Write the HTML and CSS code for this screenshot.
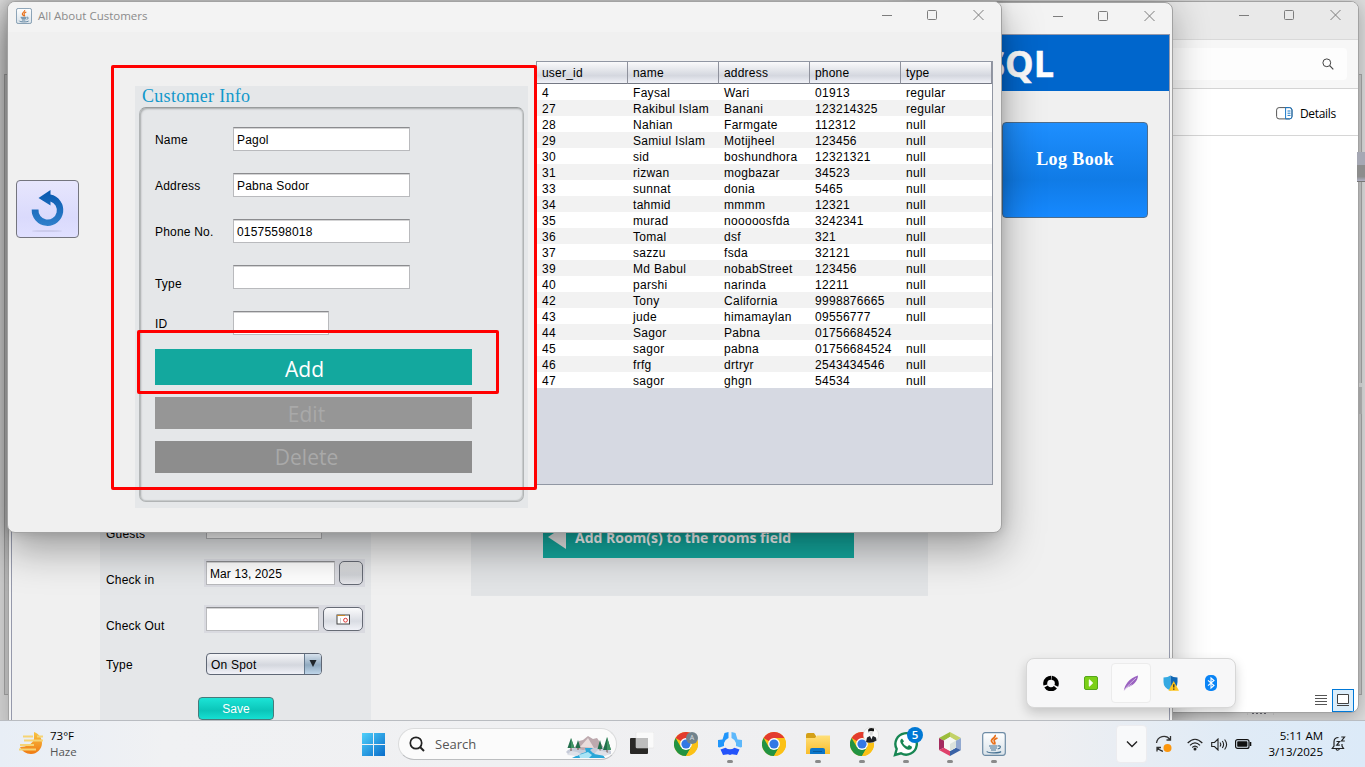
FILE: index.html
```html
<!DOCTYPE html>
<html lang="en">
<head>
<meta charset="utf-8">
<title>All About Customers</title>
<link rel="stylesheet" href="styles.css">
</head>
<body>
<svg width="0" height="0" class="defs">
  <defs>
    <linearGradient id="win" gradientUnits="userSpaceOnUse" x1="0" y1="0" x2="24" y2="24"><stop offset="0" stop-color="#4fd0fa"/><stop offset="1" stop-color="#0668c8"/></linearGradient>
    <linearGradient id="haze" x1="0" y1="0" x2="0" y2="1"><stop offset="0" stop-color="#f7c443"/><stop offset="1" stop-color="#f07a12"/></linearGradient>
    <linearGradient id="folder" x1="0" y1="0" x2="0" y2="1"><stop offset="0" stop-color="#ffe07a"/><stop offset="1" stop-color="#f9bd2c"/></linearGradient>
    <linearGradient id="undo" x1="0" y1="0" x2="0" y2="1"><stop offset="0" stop-color="#0758ae"/><stop offset="1" stop-color="#3080cb"/></linearGradient>
    <linearGradient id="javabg" x1="0" y1="0" x2="0" y2="1"><stop offset="0" stop-color="#fff"/><stop offset="1" stop-color="#d9e2e9"/></linearGradient>
    <symbol id="java" viewBox="0 0 24 24">
      <rect x=".7" y=".7" width="22.6" height="22.6" rx="2.5" fill="url(#javabg)" stroke="#6d8ba5" stroke-width="1.2"/>
      <path d="M13 3C14.500 5.500 8.500 6.800 9.500 9.300C10 10.500 11.500 11 11.500 12.500M15.500 6C13 7 11.500 8 12.300 9.300C13 10.300 13.500 11 12.500 12.500" fill="none" stroke="#e8701a" stroke-width="1.700"/>
      <path d="M7 14H15.500M8 16H15M9 18H14M16 14C19.500 13.200 19 16.600 15.700 16.800M5 19.200C5 21.300 17.500 21.300 19 19.500" fill="none" stroke="#477293" stroke-width="1.200"/>
    </symbol>
    <symbol id="chrome" viewBox="0 0 24 24">
      <circle cx="12" cy="12" r="12" fill="#fbc116"/>
      <path d="M12 12L1.600 6A12 12 0 0 1 22.400 6H12z" fill="#e33b2e"/>
      <path d="M1.600 6A12 12 0 0 0 12 24l5.200-9L12 12 6.800 15z" fill="#229342"/>
      <path d="M12 24A12 12 0 0 0 22.400 6H12l5.200 9z" fill="#fbc116"/>
      <circle cx="12" cy="12" r="5.900" fill="#fff"/><circle cx="12" cy="12" r="4.600" fill="#3378e5"/>
    </symbol>
    <symbol id="controls" viewBox="0 0 104 12">
      <path d="M1 6.500h10M92.500 1l10 10M102.500 1l-10 10" fill="none" stroke="#7d7d7d"/>
      <rect x="46.500" y="1.500" width="9" height="9" rx="1" fill="none" stroke="#7d7d7d"/>
    </symbol>
  </defs>
</svg>
<main class="desktop">
  <div class="edge-window"></div>
  <div class="edge-thumb"></div>
  <div class="edge-gap"></div>

  <section class="window explorer">
    <header class="explorer-title"><svg class="controls"><use href="#controls"/></svg></header>
    <div class="explorer-search"><div class="searchfield"><svg width="12" height="12" viewBox="0 0 12 12"><circle cx="4.800" cy="4.800" r="3.900" fill="none" stroke="#444"/><path d="M7.700 7.700l3.600 3.600" stroke="#444" stroke-width="1.200"/></svg></div></div>
    <div class="explorer-tools">
      <svg width="17" height="13" viewBox="0 0 17 13"><rect x=".6" y=".6" width="15.400" height="11.300" rx="2.500" fill="#fff" stroke="#555"/><path d="M9.600.6h4a2.500 2.500 0 0 1 2.400 2.500v6.300a2.500 2.500 0 0 1-2.400 2.500h-4zM11.500 4h3M11.500 6.200h3M11.500 8.400h3" fill="none" stroke="#1878c8"/></svg>
      <span>Details</span>
    </div>
    <footer class="explorer-views">
      <svg width="12" height="11" viewBox="0 0 12 11"><path d="M0 .5h12M0 3.500h12M0 6.500h12M0 9.500h12" stroke="#555"/></svg>
      <span class="view-on"><svg width="14" height="13" viewBox="0 0 14 13"><path d="M1.500.5h11v9h-11zM1 11.500h12" fill="#fff" stroke="#444"/></svg></span>
    </footer>
  </section>
  <div class="edge-mark"></div>

  <section class="window booking">
    <header class="booking-title"><svg class="controls"><use href="#controls"/></svg></header>
    <div class="booking-client">
      <div class="banner">SQL</div>
      <div class="booking-body">
        <div class="guest-form">
          <div class="grow g1"><label>Guests</label><span class="input w116"></span></div>
          <div class="grow g2"><label>Check in</label><span class="datebox"><span class="input w130">Mar 13, 2025</span><span class="metal mini"></span></span></div>
          <div class="grow g3"><label>Check Out</label><span class="datebox"><span class="input w114"></span><span class="metal calbtn"><svg width="15" height="11" viewBox="0 0 15 11"><rect x="1" y="1" width="12.500" height="9" fill="#fff" stroke="#444"/><path d="M1 1.500h8" stroke="#c8882a"/><path d="M4.500 4v5" stroke="#ccc"/><circle cx="9.500" cy="6.200" r="1.900" fill="none" stroke="#e03535"/></svg></span></span></div>
          <div class="grow g4"><label>Type</label><span class="combo"><span>On Spot</span><i><svg width="8" height="8"><path d="M.5 0h7L4 7z" fill="#20262b"/></svg></i></span></div>
          <button class="save">Save</button>
        </div>
        <div class="room-panel"><div class="room-btn"><svg width="18" height="24" viewBox="0 0 18 24"><path d="M0 12L18 0v24z" fill="#e8e8e8"/></svg><span>Add Room(s) to the rooms field</span></div></div>
        <div class="logbook">Log Book</div>
      </div>
    </div>
  </section>

  <section class="window customers">
    <header class="customers-title"><svg width="16" height="16"><use href="#java"/></svg><span>All About Customers</span><svg class="controls"><use href="#controls"/></svg></header>
    <div class="customers-body">
      <button class="back"><svg width="36" height="46" viewBox="0 0 36 46"><path d="M20.500 4v4.600A15.800 15.800 0 1 1 1.700 23.500H8.500A9.200 9.200 0 1 0 20.500 15.600V19.500L8.500 12z" fill="url(#undo)"/><ellipse cx="17" cy="45" rx="15" ry="1" fill="#b8b8da" opacity=".5"/></svg></button>
      <fieldset class="customer-info">
        <div class="legend">Customer Info</div>
        <div class="frame">
          <div class="row"><label>Name</label><span class="input">Pagol</span></div>
          <div class="row"><label>Address</label><span class="input">Pabna Sodor</span></div>
          <div class="row"><label>Phone No.</label><span class="input">01575598018</span></div>
          <div class="row low"><label>Type</label><span class="input"></span></div>
          <div class="row last"><label>ID</label><span class="input short"></span></div>
          <div class="action add"><span>Add</span></div>
          <div class="action edit"><span>Edit</span></div>
          <div class="action delete"><span>Delete</span></div>
        </div>
      </fieldset>
      <div class="tablebox">
        <table>
          <thead><tr><th>user_id</th><th>name</th><th>address</th><th>phone</th><th>type</th></tr></thead>
          <tbody>
            <tr><td>4</td><td>Faysal</td><td>Wari</td><td>01913</td><td>regular</td></tr>
            <tr><td>27</td><td>Rakibul Islam</td><td>Banani</td><td>123214325</td><td>regular</td></tr>
            <tr><td>28</td><td>Nahian</td><td>Farmgate</td><td>112312</td><td>null</td></tr>
            <tr><td>29</td><td>Samiul Islam</td><td>Motijheel</td><td>123456</td><td>null</td></tr>
            <tr><td>30</td><td>sid</td><td>boshundhora</td><td>12321321</td><td>null</td></tr>
            <tr><td>31</td><td>rizwan</td><td>mogbazar</td><td>34523</td><td>null</td></tr>
            <tr><td>33</td><td>sunnat</td><td>donia</td><td>5465</td><td>null</td></tr>
            <tr><td>34</td><td>tahmid</td><td>mmmm</td><td>12321</td><td>null</td></tr>
            <tr><td>35</td><td>murad</td><td>nooooosfda</td><td>3242341</td><td>null</td></tr>
            <tr><td>36</td><td>Tomal</td><td>dsf</td><td>321</td><td>null</td></tr>
            <tr><td>37</td><td>sazzu</td><td>fsda</td><td>32121</td><td>null</td></tr>
            <tr><td>39</td><td>Md Babul</td><td>nobabStreet</td><td>123456</td><td>null</td></tr>
            <tr><td>40</td><td>parshi</td><td>narinda</td><td>12211</td><td>null</td></tr>
            <tr><td>42</td><td>Tony</td><td>California</td><td>9998876665</td><td>null</td></tr>
            <tr><td>43</td><td>jude</td><td>himamaylan</td><td>09556777</td><td>null</td></tr>
            <tr><td>44</td><td>Sagor</td><td>Pabna</td><td>01756684524</td><td></td></tr>
            <tr><td>45</td><td>sagor</td><td>pabna</td><td>01756684524</td><td>null</td></tr>
            <tr><td>46</td><td>frfg</td><td>drtryr</td><td>2543434546</td><td>null</td></tr>
            <tr><td>47</td><td>sagor</td><td>ghgn</td><td>54534</td><td>null</td></tr>
          </tbody>
        </table>
      </div>
    </div>
  </section>
  <div class="mark mark-form"></div>
  <div class="mark mark-add"></div>

  <div class="tray">
    <span><svg width="16" height="16" viewBox="0 0 16 16"><circle cx="8" cy="8.500" r="5.800" fill="none" stroke="#000" stroke-width="4" stroke-dasharray="10.650 1.500" transform="rotate(-82.500 8 8.500)"/></svg></span>
    <span><svg width="16" height="16" viewBox="0 0 16 16"><rect x="1.500" y="1.500" width="13" height="13" rx="1.500" fill="#7bd018" stroke="#55a61b"/><path d="M6.300 4.800L9.700 8l-3.400 3.200z" fill="#fff" stroke="#fff"/></svg></span>
    <span class="tray-on"><svg width="16" height="16" viewBox="0 0 16 16"><path d="M1 15.500C1.500 10 6 3.500 15 .5 15 6 10 11 4 12.500z" fill="#9a62c0"/><path d="M1 15.500C5 10 9 7 13 3M4.500 12L9 9.700" stroke="#e4d4ef" fill="none" stroke-width=".7"/></svg></span>
    <span><svg width="16" height="16" viewBox="0 0 16 16"><path d="M.5 2.500Q5 2.500 7.500.5v15Q.5 13 .5 7z" fill="#35a9e2"/><path d="M7.500.5Q10 2.500 14.500 2.500V7q0 6-7 8.500z" fill="#1067b5"/><path d="M10.700 6L16 15.700H5.500z" fill="#ffc51b"/><path d="M10.800 9.300v3.200M10.800 13.500v1.200" stroke="#222" stroke-width="1.200"/></svg></span>
    <span><svg width="14" height="16" viewBox="0 0 14 16"><rect x="1" y="0" width="12" height="16" rx="5" fill="#0a84f5"/><path d="M4 5.300l6 5.200-3 2.500V3l3 2.500-6 5.200" fill="none" stroke="#fff" stroke-width="1.100"/></svg></span>
  </div>

  <footer class="taskbar">
    <div class="weather">
      <svg width="26" height="24" viewBox="0 0 26 24"><path d="M15 0c5 2 8 6 8 11 0 6-5 11-11 11-5 0-9-3-11-7 6 0 13-3 14-8z" fill="url(#haze)"/><path d="M4 4.500h10M18 4.500h6M5 8.500h19M1 13h14M0 17.500h17" stroke="#f6d474" stroke-width="2"/></svg>
      <div><b>73°F</b><em>Haze</em></div>
    </div>
    <svg class="start" width="24" height="24" viewBox="0 0 24 24"><path d="M0 0h11v11H0zM12 0h11v11H12zM0 12h11v11H0zM12 12h11v11H12z" fill="url(#win)"/></svg>
    <div class="search"><svg width="16" height="16" viewBox="0 0 16 16"><circle cx="7" cy="7" r="5.700" fill="none" stroke="#222" stroke-width="1.700"/><path d="M11 11l4 4" stroke="#222" stroke-width="1.900"/></svg><span>Search</span>
      <svg class="scene" width="46" height="22" viewBox="0 0 46 22"><path d="M8 12L13 5l4-1 5-4 5 3 4-1 7 10-6 4H12z" fill="#bda9ae"/><path d="M14 11l8-9 3 5 3 5z" fill="#e9dcdb"/><path d="M0 16q3-4 9-4l8 2 11-2 9-1 8 4v3l-8 1H3z" fill="#c7ccd9"/><path d="M19 12h8l-3 2 3 3 10 2 2 3H6l8-4 6-2z" fill="#2aa7d8"/><path d="M13 19l9-3 4 3-3 3h-9z" fill="#a9e4f5"/><path d="M5 2l3.500 10h-7zM12 4l2.500 8h-5zM34 4l2.500 9h-5zM41 1l4 13h-8z" fill="#23704d"/><path d="M5 2l3.500 10H5zM41 1l4 13h-4z" fill="#3f9463"/><path d="M5 12v3M12 12v2M34 13v2M41 14v3" stroke="#765047"/><path d="M1 19l4-4 6 1 4 2-4 2zM28 18l4-4 8 2 4 2-5 2z" fill="#dfe1e8"/></svg>
    </div>
    <div class="apps">
      <span><svg width="24" height="24" viewBox="0 0 24 24"><rect x="0" y="6" width="18" height="16" rx="1" fill="#292826"/><rect x="6" y="0" width="18" height="16" rx="1" fill="#fafafa" stroke="#ddd" stroke-width=".5"/><path d="M6 6h12v10H6z" fill="#bdbdbd"/></svg></span>
      <span><svg width="24" height="24"><use href="#chrome"/></svg><i class="avatar">A</i></span>
      <span class="run"><svg width="24" height="24" viewBox="0 0 24 24"><path d="M6.500 1L10.500 0v6Q7 7.500 6 11v3L1.500 15.500 0 15V8l4.500-.5z" fill="#2196fb"/><path d="M17.500 1L13.500 0v6Q17 7.500 18 11v3l4.500 1.500L24 15V8l-4.500-.5z" fill="#5db8fb"/><path d="M2.500 17.500L7.500 15.700Q12 19 16.500 15.700l5 1.800-2.500 5.500-5-.8-2 .8-2-.8-5 .8z" fill="#2453fa"/></svg></span>
      <span><svg width="24" height="24"><use href="#chrome"/></svg></span>
      <span class="run"><svg width="24" height="24" viewBox="0 0 24 24"><path d="M0 3q0-2 2-2h6l2 3v3H0z" fill="#d4a017"/><path d="M0 6h9l2-2.500h13V22H0z" fill="url(#folder)"/><path d="M4 22v-4q0-2 2-2h11q2 0 2 2v4z" fill="#0b75c9"/><path d="M7 19.500h9" stroke="#075a9e"/></svg></span>
      <span class="run"><svg width="24" height="24"><use href="#chrome"/></svg><svg class="photo" width="16" height="16" viewBox="0 0 16 16"><circle cx="8" cy="8" r="7.700" fill="#fafafa" stroke="#ccc" stroke-width=".5"/><path d="M5 3q1-3 6-1.500V4l-1 .5q-2-1-4 0V6z" fill="#151515"/><path d="M6.500 4.500l3.500 0-.5 4H7z" fill="#ddd"/><path d="M3 15l1-4.500 3-1.500 1 2 2-2 3 1.500.5 3Q8 17 3 15z" fill="#202328"/><path d="M7.500 9.500l1 3 1-3z" fill="#fff"/></svg></span>
      <span class="run"><svg width="26" height="26" viewBox="0 0 26 26"><path d="M2 24L3.700 18A10.700 10.700 0 1 1 8 22.300z" fill="#fff" stroke="#178653" stroke-width="2.400"/><path d="M9 7.500q-3 2-1 5 3 5 7 6.300 4 .5 4-3l-3-1.700-1.700 1.700q-3-1-4.500-4l1.200-1.500z" fill="#178653"/></svg><i class="count">5</i></span>
      <span class="run"><svg width="22" height="24" viewBox="0 0 22 24"><path d="M0 6L11 0v5L5 8.700z" fill="#9bbd3c"/><path d="M11 0l11 6-5 2.700L11 5z" fill="#c3d268"/><path d="M0 6l5 2.700v7L0 18z" fill="#a42c5e"/><path d="M0 18l5-2.300 6 3.300v5z" fill="#df416b"/><path d="M22 6l-5 2.700v7l5 2.300z" fill="#92a9d0"/><path d="M22 18l-5-2.300-6 3.300v5z" fill="#3a62a6"/><path d="M5 8.500l6-3.500 6 3.500v7L11 19l-6-3.500z" fill="#f5f8f3"/><path d="M11 12v7l6-3.500v-7z" fill="#dbe3dd"/></svg></span>
      <span class="run"><svg width="24" height="24"><use href="#java"/></svg></span>
    </div>
    <div class="status">
      <span class="chev"><svg width="12" height="8" viewBox="0 0 12 8"><path d="M1 1.500l5 5 5-5" fill="none" stroke="#222" stroke-width="1.400"/></svg></span>
      <svg class="sync" width="18" height="18" viewBox="0 0 18 18"><path d="M1.500 8A7.500 7.500 0 0 1 15 4.500M15.500 1v4h-4M8 16.300Q4 15.500 2 12M2 16.500v-4h4" fill="none" stroke="#333" stroke-width="1.300"/><circle cx="12.500" cy="13" r="4" fill="#fb960e"/></svg>
      <svg class="wifi" width="16" height="13" viewBox="0 0 16 13"><path d="M.7 5Q8-2.500 15.300 5M3 7.300q5-5 10 0M5.300 9.500q2.700-2.600 5.400 0" fill="none" stroke="#222" stroke-width="1.200"/><circle cx="8" cy="11" r="1.500" fill="#222"/></svg>
      <svg class="vol" width="17" height="13" viewBox="0 0 17 13"><path d="M.7 4.500h2.800L7 1v11L3.500 8.500H.7zM9 4.500q1.500 2 0 4M11.300 3q2.600 3.500 0 7M13.600 1.500q4 5 0 10" fill="none" stroke="#222" stroke-width="1.100"/></svg>
      <svg class="bat" width="17" height="10" viewBox="0 0 17 10"><rect x=".6" y=".6" width="13.400" height="8.800" rx="2" fill="none" stroke="#111" stroke-width="1.200"/><rect x="2.200" y="2.200" width="10.200" height="5.600" rx=".8" fill="#111"/><path d="M15.500 3v4" stroke="#111" stroke-width="1.600"/></svg>
      <div class="clock"><span>5:11 AM</span><span>3/13/2025</span></div>
      <svg class="bell" width="15" height="16" viewBox="0 0 15 16"><path d="M7.500 1.500Q3 1.500 3 6v4l-1.700 2.500H12.500L11 10V8M5 13q1.500 2.500 3.500 0M5.500 5.500h3L5.700 9.200h3.100M10.300 1h3.200l-3 4h3.300" fill="none" stroke="#222" stroke-width="1.200"/></svg>
    </div>
  </footer>
</main>
</body>
</html>
```
FILE: styles.css
```css
* { box-sizing: border-box; }
body { margin: 0; font: 12px "Liberation Sans", Arial, sans-serif; color: #000; }
svg { display: block; flex: none; }
button { font: inherit; padding: 0; }
.defs { position: absolute; }
.desktop { position: relative; width: 1365px; height: 767px; overflow: hidden; background: #dedede; }

/* windows */
.window { position: absolute; border: 1px solid #a2a2a2; border-radius: 8px; overflow: hidden; }
.controls { width: 104px; height: 12px; margin-left: auto; }

.edge-window { position: absolute; left: 4px; top: 74px; width: 1358px; height: 621px; border: 1px solid #a9a9a9; background: #cdcdcd; }
.edge-thumb { position: absolute; left: 1357px; top: 152px; width: 8px; height: 30px; z-index: 1; background: linear-gradient(#a6a8b4 0 45%, #8d8d8d 45% 85%, #b0b1c4); border-bottom: 1px solid #777; }
.edge-gap { position: absolute; left: 1358px; top: 383px; width: 4px; height: 31px; background: #bababa; border-top: 4px solid #dedede; }
.edge-mark { position: absolute; left: 1247px; top: 713px; width: 27px; height: 2px; border: solid #aaa; border-width: 0 1px; background: repeating-linear-gradient(90deg, #55555d 0 2px, transparent 2px 4px) 4px 0 / 15px 1px no-repeat; }

.explorer { left: 900px; top: 1px; width: 459px; height: 712px; background: #fff; display: flex; flex-direction: column; box-shadow: 0 4px 20px rgba(0,0,0,.28); }
.explorer-title { height: 38px; flex: none; background: #e9e9e9; padding: 7px 17px 0; border-bottom: 1px solid #d9d9d9; }
.explorer-search { height: 49px; flex: none; background: #f7f7f7; padding: 8px 11px 8px 0; border-bottom: 1px solid #d4d4d4; }
.searchfield { height: 32px; background: #fdfdfd; border-radius: 4px; display: flex; align-items: center; justify-content: flex-end; padding-right: 13px; }
.explorer-tools { height: 47px; flex: none; display: flex; align-items: center; justify-content: flex-end; gap: 7px; padding: 2px 22px 0 0; border-bottom: 1px solid #d6d6d6; font: 12px "Open Sans", sans-serif; letter-spacing: -.3px; }
.explorer-title { padding-right: 16px; }
.explorer-views { margin-top: auto; display: flex; justify-content: flex-end; align-items: center; gap: 5px; padding-right: 4px; }
.view-on { width: 22px; height: 23px; border: 1px solid #0078d7; background: #dceefb; display: grid; place-items: center; }

.booking { left: 8px; top: 2px; width: 1165px; height: 740px; background: #f3f3f3; box-shadow: 0 6px 36px rgba(0,0,0,.3); }
.booking-title { height: 31px; padding: 7px 16px 0; }
.booking-client { margin: 0 2px; height: 708px; border: 1px solid #9599ab; background: #f0f0f0; }
.banner { height: 56px; background: #0066cc; color: #fff; font: bold 36px/58px "Open Sans", sans-serif; -webkit-text-stroke: .5px #fff; text-align: right; padding-right: 115px; }
.booking-body { display: flex; height: 650px; padding-left: 88px; align-items: flex-start; }
.guest-form { width: 271px; height: 650px; background: #e5e7e9; padding: 424px 6px 0; }
.grow { display: flex; align-items: flex-start; }
.grow label { width: 100px; letter-spacing: .2px; }
.g1 { height: 44px; }
.g1 label { padding-top: 12px; }
.g2 { height: 46px; }
.g3 { height: 46px; }
.g2 label, .g3 label { padding-top: 14px; width: 98px; }
.g4 { padding-top: 2px; height: 46px; }
.g4 label { padding-top: 5px; }
.datebox { width: 161px; height: 28px; padding: 2px; display: flex; gap: 4px; background: #d9dae0; }
.input { width: 177px; height: 24px; background: #fff; border: 1px solid #b9babd; border-top-color: #8b8c8f; box-shadow: inset 0 1px #d4d4d5; padding-left: 3px; line-height: 24px; letter-spacing: .2px; }
.w116 { width: 116px; } .w130 { width: 130px; } .w114 { width: 114px; }
.w130 { letter-spacing: .1px; }
.metal { width: 24px; height: 24px; border: 1px solid #666b75; border-radius: 5px; background: linear-gradient(#fbfbfc, #d9dce3 60%, #f1f2f8); display: grid; place-items: center; }
.mini { background: linear-gradient(#dedfe0, #d0d2d6 60%, #e8e8ec); }
.calbtn { width: 40px; }
.combo { width: 116px; height: 22px; display: flex; border: 1px solid #5f6775; border-radius: 4px; background: linear-gradient(#f5f6f8, #d4d7de 55%, #f1f2f8); line-height: 22px; overflow: hidden; letter-spacing: .2px; }
.combo span { flex: 1; padding-left: 4px; }
.combo i { width: 17px; background: linear-gradient(#d7e2ed, #90aac0 55%, #bfd6ea); border-left: 1px solid #64788c; display: grid; place-items: center; }
.save { display: block; margin-left: 92px; width: 76px; height: 23px; border: 1px solid #487a7a; border-radius: 4px; background: linear-gradient(#1ce4d6, #0bc5b9 60%, #16e0d2); color: #fff; }
.room-panel { margin-left: 100px; width: 457px; height: 505px; background: #e2e4e6; padding: 427px 72px 0; }
.room-btn { width: 311px; height: 40px; background: #13a89e; display: flex; align-items: center; gap: 9px; padding: 0 0 2px 5px; color: #fff; font: bold 14px "Open Sans", sans-serif; }
.logbook { margin: 31px 0 0 74px; width: 146px; height: 96px; border: 1px solid #4e6d8c; border-radius: 4px; background: linear-gradient(#1e8fff, #107be6 60%, #1689ff); color: #fff; font: bold 18px/73px "Liberation Serif", serif; text-align: center; letter-spacing: .4px; }

.customers { left: 7px; top: 1px; width: 995px; height: 532px; background: #f0f0f0; box-shadow: 0 16px 42px rgba(0,0,0,.36), 0 0 12px rgba(0,0,0,.14); }
.customers-title { height: 30px; background: #f3f3f3; padding: 6px 16px 0 8px; display: flex; color: #8b8b8b; font: 11.500px/16px "Open Sans", sans-serif; }
.customers-title span { margin-left: 6px; }
.customers-title .controls { margin-top: 1px; }
.customers-body { display: flex; align-items: flex-start; padding-left: 8px; }
.back { margin-top: 148px; width: 63px; height: 58px; border: 1px solid #74757e; border-radius: 4px; background: linear-gradient(#e7e6fd, #dadafc 65%, #e0e0ff); display: grid; place-items: center; }
.customer-info { margin: 54px 0 0 56px; border: 0; padding: 0 4px; width: 393px; height: 422px; background: #e5e7e9; }
.legend { height: 21px; padding-left: 3px; font: 18px/21px "Liberation Serif", serif; color: #1198cb; letter-spacing: .3px; }
.frame { height: 395px; border: 1px solid #b1b4b5; border-top-color: #999c9d; border-radius: 7px; padding: 19px 15px 0; box-shadow: inset 1px 1px 2px #a6a9aa, inset -1px -1px 1px #c6c9ca; }
.row { display: flex; height: 46px; }
.row label { width: 78px; line-height: 26px; letter-spacing: .2px; }
.row.low label { line-height: 38px; }
.row.last { height: 38px; }
.row .short { width: 96px; }
.action { width: 317px; height: 32px; margin-bottom: 12px; display: flex; align-items: center; justify-content: center; font: 21px "Open Sans", sans-serif; color: #a9a9a9; }
.action span { margin-right: 14px; }
.add { height: 36px; background: #13a89e; color: #fff; }
.add span { margin-right: 18px; padding-top: 3px; }
.edit { background: #969696; }
.edit span { padding-top: 2px; }
.delete { background: #8d8d8d; }
.tablebox { margin: 29px 0 0 8px; width: 457px; height: 424px; border: 1px solid #9197a3; background: #d6d9e2; }
table { width: 455px; border-collapse: separate; border-spacing: 0; table-layout: fixed; }
th { height: 22px; padding: 0 0 0 5px; text-align: left; font-weight: normal; letter-spacing: .2px; background: linear-gradient(#fafafb, #d4d7df 65%, #f0f1f7); border-right: 1px solid #8f929d; border-bottom: 1px solid #747883; }
td { height: 16px; padding: 2px 0 0 5px; line-height: 14px; letter-spacing: .3px; white-space: nowrap; }
tbody tr { background: #fff; }
tbody tr:nth-child(even) { background: #f2f2f2; }

.mark { position: absolute; border: 3px solid #f00; border-radius: 2px; }
.mark-form { left: 111px; top: 65px; width: 426px; height: 425px; }
.mark-add { left: 137px; top: 330px; width: 362px; height: 64px; }

/* tray overflow */
.tray { position: absolute; left: 1026px; top: 658px; width: 210px; height: 50px; border: 1px solid #d7d7d7; border-radius: 8px; background: #f7f7f8; box-shadow: 0 5px 12px rgba(0,0,0,.18); display: flex; align-items: center; padding: 0 4px; }
.tray span { width: 40px; height: 40px; display: grid; place-items: center; }
.tray .tray-on { background: #fbfbfb; border: 1px solid #ececec; border-radius: 4px; }

/* taskbar */
.taskbar { position: absolute; left: 0; bottom: 0; width: 1365px; height: 47px; border-top: 1px solid #b9bcc1; background: linear-gradient(90deg, #e8eef6, #f0f1f3 12%, #efeff1 60%, #efeff1 76%, #e0ebf6 90%, #dceaf8); display: flex; align-items: center; font-family: "Open Sans", sans-serif; }
.weather { width: 343px; padding-left: 19px; display: flex; align-items: center; gap: 5px; }
.weather b, .weather em { display: block; font: 11.500px/16px "Open Sans", sans-serif; }
.weather em { color: #555; }
.start { margin: 2px 0 0 19px; }
.search { margin-left: 12px; width: 219px; height: 32px; border: 1px solid #dadbdc; border-bottom-color: #bcbec0; border-radius: 16px; background: #fbfbfb; display: flex; align-items: center; padding: 0 4px 0 10px; color: #555; font-size: 13px; }
.search span { margin-left: 10px; }
.scene { margin-left: auto; margin-top: 5px; }
.apps { display: flex; margin-left: 3px; }
.apps > span { position: relative; width: 44px; height: 46px; display: grid; place-items: center; }
.apps > .run::after { content: ""; position: absolute; left: 19px; bottom: 4px; width: 6px; height: 3px; border-radius: 2px; background: #8a8a8a; }
.avatar { position: absolute; left: 22px; top: 11px; width: 12px; height: 12px; border-radius: 50%; background: #71838d; color: #d7dee1; font: 7px/12px "Open Sans", sans-serif; text-align: center; }
.photo { position: absolute; left: 23px; top: 6px; }
.count { position: absolute; left: 23px; top: 6px; width: 16px; height: 16px; border-radius: 50%; background: #0078d4; color: #fff; font: 600 11.500px/16px "Open Sans", sans-serif; text-align: center; }
.status { margin-left: auto; height: 46px; display: flex; align-items: center; padding-right: 19px; }
.chev { width: 31px; height: 38px; border: 1px solid #ececef; border-radius: 4px; background: #f8f9fa; display: grid; place-items: center; margin: 0 8px 0 -1px; }
.wifi { margin-left: 14px; }
.vol { margin-left: 8px; }
.bat { margin-left: 7px; }
.clock { width: 71px; display: flex; flex-direction: column; text-align: right; font: 11.500px/16px "Open Sans", sans-serif; }
.bell { margin-left: 8px; }
```
